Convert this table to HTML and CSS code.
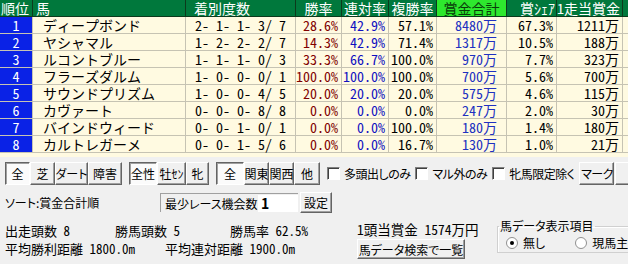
FILE: index.html
```html
<!DOCTYPE html>
<html lang="ja">
<head>
<meta charset="utf-8">
<link rel="stylesheet" href="styles.css">
</head>
<body>
<div class="grid">
  <div class="row head">
    <div class="c rank-h">順位</div>
    <div class="c name-h">馬</div>
    <div class="c rec-h">着別度数</div>
    <div class="c ctr">勝率</div>
    <div class="c ctr">連対率</div>
    <div class="c ctr">複勝率</div>
    <div class="c ctr sel">賞金合計</div>
    <div class="c share-h">賞ｼｪｱ</div>
    <div class="c">1走当賞金</div>
    <div class="c"></div>
  </div>
  <div class="row"><div class="c rank">1</div><div class="c name">ディープボンド</div><div class="c rec">2- 1- 1- 3/ 7</div><div class="c num win">28.6%</div><div class="c num ren">42.9%</div><div class="c num">57.1%</div><div class="c prize">8480万</div><div class="c num">67.3%</div><div class="c num">1211万</div><div class="c"></div></div>
  <div class="row"><div class="c rank">2</div><div class="c name">ヤシャマル</div><div class="c rec">1- 2- 2- 2/ 7</div><div class="c num win">14.3%</div><div class="c num ren">42.9%</div><div class="c num">71.4%</div><div class="c prize">1317万</div><div class="c num">10.5%</div><div class="c num">188万</div><div class="c"></div></div>
  <div class="row"><div class="c rank">3</div><div class="c name">ルコントブルー</div><div class="c rec">1- 1- 1- 0/ 3</div><div class="c num win">33.3%</div><div class="c num ren">66.7%</div><div class="c num">100.0%</div><div class="c prize">970万</div><div class="c num">7.7%</div><div class="c num">323万</div><div class="c"></div></div>
  <div class="row"><div class="c rank">4</div><div class="c name">フラーズダルム</div><div class="c rec">1- 0- 0- 0/ 1</div><div class="c num win">100.0%</div><div class="c num ren">100.0%</div><div class="c num">100.0%</div><div class="c prize">700万</div><div class="c num">5.6%</div><div class="c num">700万</div><div class="c"></div></div>
  <div class="row"><div class="c rank">5</div><div class="c name">サウンドプリズム</div><div class="c rec">1- 0- 0- 4/ 5</div><div class="c num win">20.0%</div><div class="c num ren">20.0%</div><div class="c num">20.0%</div><div class="c prize">575万</div><div class="c num">4.6%</div><div class="c num">115万</div><div class="c"></div></div>
  <div class="row"><div class="c rank">6</div><div class="c name">カヴァート</div><div class="c rec">0- 0- 0- 8/ 8</div><div class="c num win">0.0%</div><div class="c num ren">0.0%</div><div class="c num">0.0%</div><div class="c prize">247万</div><div class="c num">2.0%</div><div class="c num">30万</div><div class="c"></div></div>
  <div class="row"><div class="c rank">7</div><div class="c name">バインドウィード</div><div class="c rec">0- 0- 1- 0/ 1</div><div class="c num win">0.0%</div><div class="c num ren">0.0%</div><div class="c num">100.0%</div><div class="c prize">180万</div><div class="c num">1.4%</div><div class="c num">180万</div><div class="c"></div></div>
  <div class="row"><div class="c rank">8</div><div class="c name">カルトレガーメ</div><div class="c rec">0- 0- 1- 5/ 6</div><div class="c num win">0.0%</div><div class="c num ren">0.0%</div><div class="c num">16.7%</div><div class="c prize">130万</div><div class="c num">1.0%</div><div class="c num">21万</div><div class="c"></div></div>
</div>

<div class="toolbar">
  <div class="grp">
    <span class="btn on w25">全</span><span class="btn w25">芝</span><span class="btn w33">ダート</span><span class="btn w34">障害</span>
  </div>
  <div class="grp">
    <span class="btn on w28">全性</span><span class="btn w29">牡ｾﾝ</span><span class="btn w23">牝</span>
  </div>
  <div class="grp">
    <span class="btn on w28">全</span><span class="btn w25">関東</span><span class="btn w25">関西</span><span class="btn w26">他</span>
  </div>
  <label class="chk"><span class="box"></span>多頭出しのみ</label>
  <label class="chk"><span class="box"></span>マル外のみ</label>
  <label class="chk"><span class="box"></span>牝馬限定除く</label>
  <span class="btn mark">マーク</span>
  <span class="btn edge"></span>
</div>

<div class="sortrow">
  <span class="sort">ソート:賞金合計順</span>
  <span class="minbox"><span class="minlabel">最少レース機会数</span><span class="mininput">1</span></span>
  <span class="btn setbtn">設定</span>
</div>

<div class="bottom">
  <div class="stats">
    <div class="srow">
      <span class="s1">出走頭数 8</span>
      <span class="s2">勝馬頭数 5</span>
      <span>勝馬率 62.5%</span>
    </div>
    <div class="srow">
      <span class="s4">平均勝利距離 1800.0m</span>
      <span>平均連対距離 1900.0m</span>
    </div>
  </div>
  <div class="mid">
    <div class="per">1頭当賞金 1574万円</div>
    <span class="btn search">馬データ検索で一覧</span>
  </div>
  <fieldset class="gbox">
    <legend>馬データ表示項目</legend>
    <label class="radio"><span class="dot on"></span>無し</label>
    <label class="radio"><span class="dot"></span>現馬主</label>
  </fieldset>
</div>
</body>
</html>
```
FILE: styles.css
```css
* { box-sizing: border-box; }
body {
  margin: 0;
  width: 628px;
  height: 264px;
  overflow: hidden;
  background: #f0f0f0;
  color: #000;
  font-family: "Noto Sans CJK JP", sans-serif;
  font-size: 12px;
  font-feature-settings: "palt";
  white-space: nowrap;
}
.grid {
  height: 157px;
  width: 628px;
  overflow: hidden;
  background: #fffae1;
  font-family: "Noto Sans Mono CJK JP", "Noto Sans CJK JP", monospace;
  font-size: 14px;
  font-feature-settings: normal;
}
.row {
  display: grid;
  grid-template-columns: 33px 153px 110px 46px 47px 48px 70px 50px 66px 40px;
  height: 17px;
  width: 663px;
}
.c {
  border-right: 1px solid #c6c3b3;
  border-bottom: 1px solid #c6c3b3;
  height: 17px;
  line-height: 16px;
}
.head .c {
  background: #00783c;
  color: #fff;
  border-color: #0c3a1c;
}
.head .sel { background: #2ee82e; color: #0a3a0a; }
.rank-h { padding-left: 1px; }
.name-h { padding-left: 3px; }
.rec-h { padding-left: 8px; }
.ctr { text-align: center; }
.share-h { padding-left: 13px; }
.rank {
  background: #0a22e6;
  color: #fff;
  text-align: center;
  border-color: #c6c3b3;
}
.name { padding-left: 10px; }
.rec { padding-left: 9px; }
.num { text-align: right; padding-right: 3px; }
.win { color: #800000; }
.ren { color: #1010c0; }
.prize { text-align: right; padding-right: 9px; color: #2030c0; }

.toolbar {
  display: flex;
  align-items: center;
  height: 33px;
  padding-left: 5px;
  overflow: hidden;
}
.grp { display: flex; margin-right: 7px; flex-shrink: 0; }
.btn {
  display: inline-flex;
  align-items: center;
  justify-content: center;
  flex-shrink: 0;
  height: 23px;
  background: #f0f0f0;
  border: 1px solid;
  border-color: #fff #646464 #646464 #fff;
  box-shadow: inset -1px -1px 0 #a0a0a0;
  font-size: 12px;
}
.btn.on {
  background: #fbfbfb;
  border-color: #646464 #fff #fff #646464;
  box-shadow: inset 1px 1px 0 #a0a0a0;
}
.w23 { width: 23px; } .w25 { width: 25px; } .w26 { width: 26px; } .w28 { width: 28px; }
.w29 { width: 29px; } .w33 { width: 33px; } .w34 { width: 34px; }
.chk { display: flex; align-items: center; margin-right: 5px; flex-shrink: 0; letter-spacing: -0.5px; }
.box {
  width: 13px; height: 13px;
  background: #fff;
  border: 1px solid;
  border-color: #808080 #fff #fff #808080;
  box-shadow: inset 1px 1px 0 #404040;
  margin-right: 4px;
}
.mark { width: 35px; letter-spacing: -0.5px; }
.edge { width: 20px; margin-left: 1px; }

.sortrow {
  display: flex;
  align-items: center;
  height: 25px;
  padding-left: 5px;
}
.sort { width: 155px; }
.minbox {
  display: flex;
  align-items: center;
  height: 19px;
  width: 138px;
  border-top: 1px solid #a0a0a0;
  border-left: 1px solid #a0a0a0;
  padding-left: 4px;
}
.minlabel { width: 93px; }
.mininput {
  flex: 1;
  height: 17px;
  background: #fff;
  font-weight: bold;
  font-size: 14px;
  line-height: 17px;
  padding-left: 3px;
}
.setbtn { width: 32px; height: 21px; margin-left: 2px; }

.bottom {
  display: flex;
  padding-left: 5px;
  padding-top: 6px;
  font-family: "Noto Sans Mono CJK JP", "Noto Sans CJK JP", monospace;
  font-feature-settings: normal;
  font-size: 13px;
}
.stats { width: 352px; flex-shrink: 0; }
.srow { display: flex; height: 18px; align-items: center; }
.s1 { width: 110px; }
.s2 { width: 115px; }
.s4 { width: 160px; }
.mid { width: 140px; flex-shrink: 0; }
.per { height: 16px; line-height: 16px; font-size: 13.5px; }
.search {
  width: 108px; height: 20px; margin-top: 2px;
  font-family: "Noto Sans CJK JP", sans-serif;
  font-feature-settings: "palt";
}
.gbox {
  flex-shrink: 0;
  margin: -2px 0 0 0;
  padding: 0 0 0 8px;
  height: 34px;
  width: 170px;
  border: 1px solid #d0d0d0;
  box-shadow: 1px 1px 0 #fff inset;
  display: flex;
  align-items: center;
  font-family: "Noto Sans CJK JP", sans-serif;
  font-feature-settings: "palt";
  font-size: 12px;
}
.gbox legend { padding: 0 1px; margin-left: -7px; font-size: 12px; line-height: 14px; }
.radio { display: flex; align-items: center; margin-right: 30px; }
.dot {
  width: 12px; height: 12px;
  border-radius: 50%;
  background: #fff;
  border: 1px solid #909090;
  margin-right: 5px;
  position: relative;
}
.dot.on::after {
  content: "";
  position: absolute;
  left: 3px; top: 3px;
  width: 4px; height: 4px;
  border-radius: 50%;
  background: #000;
}
```
